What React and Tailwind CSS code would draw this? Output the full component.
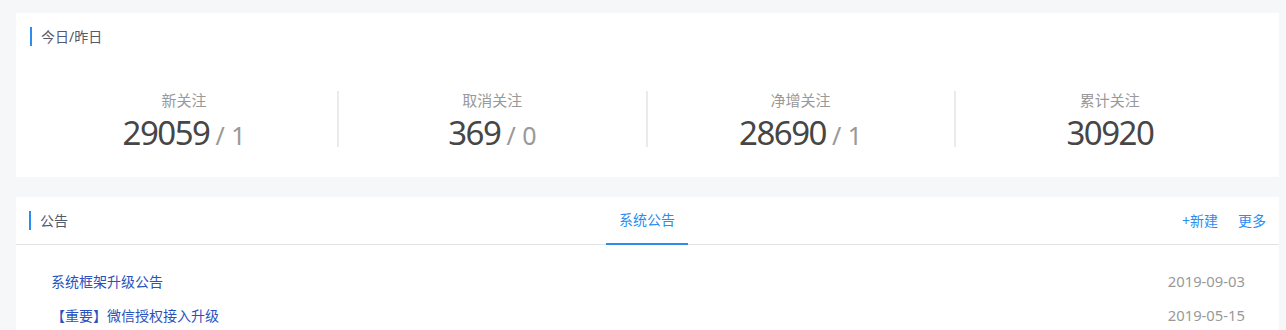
const stats = [
  { label: '新关注', value: '29059', prev: '1' },
  { label: '取消关注', value: '369', prev: '0' },
  { label: '净增关注', value: '28690', prev: '1' },
  { label: '累计关注', value: '30920' },
];

const notices = [
  { title: '系统框架升级公告', date: '2019-09-03' },
  { title: '【重要】微信授权接入升级', date: '2019-05-15' },
];

const cjk = { fontFamily: '"Noto Sans", "Noto Sans CJK SC", sans-serif' };

function CardTitle({ children }) {
  return (
    <div className="flex items-center h-[19px]">
      <span className="w-[2px] h-[19px] bg-[#2d8cf0]"></span>
      <span className="ml-[9px] text-[14px] text-[#515a6e] leading-none">{children}</span>
    </div>
  );
}

export default function App() {
  return (
    <div className="h-[330px] bg-[#f5f7f9] pt-[13px] pl-[16px] pr-[7px] overflow-hidden" style={cjk}>
      {/* 今日/昨日 */}
      <div className="bg-white h-[164px] pt-[14px] px-[15px]">
        <div className="-ml-[1px]">
          <CardTitle>今日/昨日</CardTitle>
        </div>
        <div className="grid grid-cols-4 mt-[45px]">
          {stats.map((s, i) => (
            <div
              key={s.label}
              className={
                'h-[56px] flex flex-col items-center ' +
                (i < 3 ? 'border-r-2 border-[#e8eaec]' : '')
              }
            >
              <div className="text-[15px] leading-[18px] text-[#999] mt-[0px]">{s.label}</div>
              <div className="flex items-baseline h-[30px] mt-[9px]">
                <span className="text-[33px] leading-[30px] tracking-[-1.5px] text-[#464646]">{s.value}</span>
                {s.prev && (
                  <span className="text-[25px] leading-[30px] text-[#999] ml-[6px]">/ {s.prev}</span>
                )}
              </div>
            </div>
          ))}
        </div>
      </div>

      {/* 公告 */}
      <div className="bg-white mt-[20px] h-[200px]">
        <div className="relative h-[48px] flex items-center border-b border-[#e0e2e6] pl-[13px] pr-[13px]">
          <CardTitle>公告</CardTitle>
          <div className="absolute left-[590px] bottom-[-1px] w-[82px] h-[48px] flex items-center justify-center border-b-2 border-[#2d8cf0]">
            <span className="text-[14px] text-[#2d8cf0] -mt-[1px]">系统公告</span>
          </div>
          <div className="ml-auto flex items-center gap-[20px] text-[14px] text-[#2d8cf0]">
            <span>+新建</span>
            <span>更多</span>
          </div>
        </div>
        <div className="pt-[19px] pl-[35px] pr-[34px]">
          {notices.map((n) => (
            <div key={n.title} className="flex items-center justify-between h-[34px]">
              <span className="text-[14px] text-[#2a52be]">{n.title}</span>
              <span className="text-[14.8px] text-[#999]">{n.date}</span>
            </div>
          ))}
        </div>
      </div>
    </div>
  );
}
